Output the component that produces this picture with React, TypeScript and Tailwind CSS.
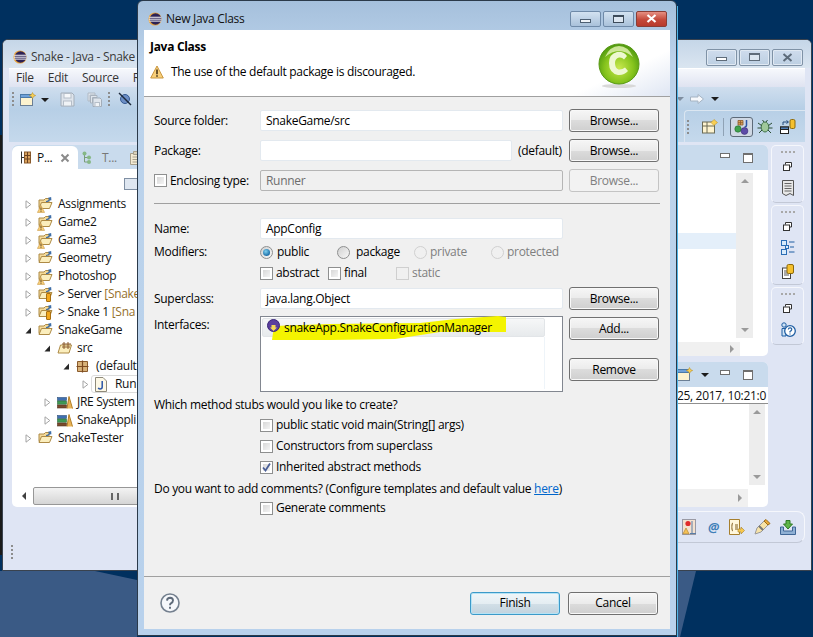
import React from "react";

const BTN_NORMAL =
  "border-[#707070] bg-[linear-gradient(#f6f6f6_0%,#ebebeb_50%,#dcdcdc_50%,#cfcfcf_100%)] shadow-[inset_0_0_0_1px_#f8f8f8] text-black";
const BTN_OFF = "border-[#c4c4c4] bg-[#f2f2f2] text-[#7f7f7f]";
const BTN_DEFAULT =
  "border-[#3c9ac9] bg-[linear-gradient(#f0f6f9_0%,#e4edf2_50%,#d2dfe7_50%,#c2d3de_100%)] shadow-[inset_0_0_0_1px_#b5e3f5] text-black";

function Btn({ label, kind = "normal", w = "w-[90px]" }: { label: string; kind?: "normal" | "off" | "default"; w?: string }) {
  const look = kind === "off" ? BTN_OFF : kind === "default" ? BTN_DEFAULT : BTN_NORMAL;
  return (
    <div className={`${w} h-[23px] shrink-0 rounded-[3px] border flex items-center justify-center ${look}`}>
      {label}
    </div>
  );
}

function Check({ on, off }: { on?: boolean; off?: boolean }) {
  return (
    <div className={`w-[13px] h-[13px] shrink-0 border ${off ? "border-[#cfcfcf] bg-[#f0f0f0]" : "border-[#8e8f8f] bg-white"} p-[2px]`}>
      <div className={`w-full h-full relative ${off ? "" : "bg-[linear-gradient(135deg,#d8d8d8,#f4f4f4)]"}`}>
        {on && (
          <svg viewBox="0 0 9 9" className="absolute left-[-1px] top-[-1px] w-[9px] h-[9px]">
            <path d="M1 4.5 L3.5 7.5 L8 0.5" fill="none" stroke="#4a5f97" strokeWidth="1.8" />
          </svg>
        )}
      </div>
    </div>
  );
}

function Radio({ on, off }: { on?: boolean; off?: boolean }) {
  return (
    <div className={`w-[13px] h-[13px] shrink-0 rounded-full border flex items-center justify-center ${off ? "border-[#d0d0d0] bg-[#f0f0f0]" : "border-[#8e8f8f] bg-[linear-gradient(135deg,#d0d0d0,#f8f8f8)]"}`}>
      {on && <div className="w-[7px] h-[7px] rounded-full bg-[radial-gradient(circle_at_40%_35%,#7fd0ef,#1a6ea8_70%,#0c4f86)]" />}
    </div>
  );
}

function FormRow({ className = "", label, children }: { className?: string; label?: string; children: React.ReactNode }) {
  return (
    <div className={`flex items-center ${className}`}>
      <div className="w-[106px] shrink-0">{label}</div>
      {children}
    </div>
  );
}

function Field({ value, w = "w-[303px]", off }: { value?: string; w?: string; off?: boolean }) {
  return (
    <div className={`${w} h-[21px] shrink-0 rounded-[2px] border px-[5px] leading-[19px] ${off ? "border-[#b5b5b5] bg-[#f0f0f0] text-[#6d6d6d]" : "border-[#e3e9ef] bg-white"}`}>
      {value}
    </div>
  );
}

function EclipseLogo({ className = "" }: { className?: string }) {
  return (
    <svg viewBox="0 0 16 16" className={className}>
      <circle cx="8" cy="8" r="7.5" fill="#e8a33d" />
      <circle cx="8.6" cy="8" r="6.6" fill="#2c2255" />
      <path d="M1.5 6 H15 M1 8.2 H15.5 M1.5 10.4 H15" stroke="#fff" strokeWidth="1.1" />
    </svg>
  );
}

function WarnBadge({ className = "" }: { className?: string }) {
  return (
    <svg viewBox="0 0 14 14" className={className}>
      <path d="M7 1 L13.3 13 H0.7 Z" fill="#f8cf7a" stroke="#c9963f" strokeLinejoin="round" />
      <path d="M7 4.5 V9.3 M7 10.3 V11.8" stroke="#3a2a10" strokeWidth="1.5" />
    </svg>
  );
}

function FolderIcon({ badge }: { badge?: "warn" | "lock" }) {
  return (
    <div className="relative w-[15px] h-[14px] shrink-0">
      <svg viewBox="0 0 15 14" className="w-[15px] h-[14px]">
        <path d="M1 3 H6 L7.5 1.5 H11 V10.5 H1 Z" fill="#f3d998" stroke="#ad8a45" />
        <path d="M1 11.5 L3.5 5.5 H14 L11.5 11.5 Z" fill="#fbeebd" stroke="#ad8a45" />
        <path d="M8 4.5 C10 4.5 11.5 3.5 12.5 1 M12.8 3.4 L12.6 0.8 L10.3 1.4" fill="none" stroke="#3f6fa8" strokeWidth="1.2" />
      </svg>
      {badge === "warn" && <WarnBadge className="absolute left-[-1px] top-[8px] w-[8px] h-[8px]" />}
      {badge === "lock" && <div className="absolute left-[8px] top-[6px] w-[5px] h-[9px] rounded-[1px] bg-[#f2a71d] border border-[#a96f10]" />}
    </div>
  );
}

function PackageIcon({ className = "" }: { className?: string }) {
  return (
    <svg viewBox="0 0 13 13" className={className}>
      <path d="M1.5 1.5 H11.5 V11.5 H1.5 Z" fill="#d8b27a" stroke="#8a5b2c" />
      <path d="M6.5 0.5 V12.5 M0.5 6.5 H12.5" stroke="#7d4a20" strokeWidth="1.2" />
    </svg>
  );
}

function SrcIcon() {
  return (
    <svg viewBox="0 0 16 14" className="w-[16px] h-[14px] shrink-0">
      <path d="M1 12 L3.5 4 H14.5 L12 12 Z" fill="#fbeebd" stroke="#ad8a45" />
      <path d="M7 1 V8 M11 1 V8 M5 3 H14 M5 6 H13" stroke="#8a5b2c" />
    </svg>
  );
}

function JavaFileIcon() {
  return (
    <svg viewBox="0 0 12 15" className="w-[12px] h-[15px] shrink-0">
      <path d="M0.5 0.5 H8 L11.5 4 V14.5 H0.5 Z" fill="#fdf8e6" stroke="#8f8a7a" />
      <path d="M7.2 4 V10 Q7.2 12 5 12 Q3.6 12 3.3 10.8" fill="none" stroke="#2b55a6" strokeWidth="1.5" />
    </svg>
  );
}

function LibIcon() {
  return (
    <svg viewBox="0 0 16 13" className="w-[16px] h-[13px] shrink-0">
      <rect x="0.5" y="1.5" width="9" height="3" fill="#3f6fb0" stroke="#30507c" strokeWidth="0.6" />
      <rect x="0.5" y="5" width="9" height="3.2" fill="#3f9a55" stroke="#2f6e3f" strokeWidth="0.6" />
      <rect x="0.5" y="9" width="9" height="3" fill="#7a4a2c" stroke="#553320" strokeWidth="0.6" />
      <path d="M10 12.5 L12 0.5 L15.5 12.5" fill="#e9b356" stroke="#b37f26" />
    </svg>
  );
}

function Twisty({ open }: { open?: boolean }) {
  return (
    <svg viewBox="0 0 7 9" className="w-[7px] h-[9px] shrink-0">
      {open ? <path d="M6 1.5 V7.5 H0.5 Z" fill="#262626" /> : <path d="M1 0.8 L5.8 4.5 L1 8.2 Z" fill="#fff" stroke="#a3a3a3" />}
    </svg>
  );
}

function TreeRow({ level = 0, open, icon, selected, children }: { level?: number; open?: boolean; icon: React.ReactNode; selected?: boolean; children: React.ReactNode }) {
  const indent = ["pl-[13px]", "pl-[32px]", "pl-[51px]", "pl-[70px]"][level];
  return (
    <div className={`h-[18px] flex items-center whitespace-nowrap ${indent}`}>
      <div className="w-[13px] flex items-center"><Twisty open={open} /></div>
      <div className={`flex items-center h-[18px] ${selected ? "border border-[#dcdcdc] rounded-[3px] -ml-[4px] pl-[3px] pr-[6px]" : ""}`}>
        <div className="w-[20px] flex items-center">{icon}</div>
        <span>{children}</span>
      </div>
    </div>
  );
}

function GripV({ className = "" }: { className?: string }) {
  return (
    <div className={`w-[2px] flex flex-col gap-[2px] ${className}`}>
      {[0, 1, 2, 3].map((i) => <div key={i} className="w-[2px] h-[2px] bg-[#8d8d8d]" />)}
    </div>
  );
}

function NewWinIcon() {
  return (
    <svg viewBox="0 0 16 15" className="w-[16px] h-[15px] shrink-0">
      <rect x="0.5" y="2.5" width="12" height="11" fill="#fdf3cf" stroke="#6b7f95" />
      <rect x="0.5" y="2.5" width="12" height="3" fill="#6fa1d8" stroke="#4b7aa8" />
      <path d="M12.5 0.5 L13.6 2.6 L15.7 3.5 L13.6 4.5 L12.5 6.6 L11.4 4.5 L9.3 3.5 L11.4 2.6 Z" fill="#f7cf55" stroke="#b58b20" strokeWidth="0.5" />
    </svg>
  );
}

function SaveOffIcon() {
  return (
    <svg viewBox="0 0 15 15" className="w-[15px] h-[15px] shrink-0">
      <path d="M1 1 H12 L14 3 V14 H1 Z" fill="#dfe5ec" stroke="#a2adb9" />
      <rect x="4" y="1.5" width="7" height="4.5" fill="#f6f8fa" stroke="#b5bec8" />
      <rect x="3.5" y="9" width="8" height="5" fill="#f0f3f6" stroke="#b5bec8" />
    </svg>
  );
}

function SaveAllOffIcon() {
  return (
    <svg viewBox="0 0 15 15" className="w-[15px] h-[15px] shrink-0">
      <path d="M1 1 H8 V3 H3 V9 H1 Z" fill="#dfe5ec" stroke="#b0bac5" />
      <path d="M3.5 3.5 H10 V5.5 H5.5 V11 H3.5 Z" fill="#dfe5ec" stroke="#a9b3be" />
      <path d="M6 6 H13 L14.5 7.5 V14.5 H6 Z" fill="#dfe5ec" stroke="#a2adb9" />
      <rect x="8" y="10.5" width="4.5" height="4" fill="#f0f3f6" stroke="#b5bec8" />
    </svg>
  );
}

function Caret({ grey }: { grey?: boolean }) {
  return <div className={`w-0 h-0 shrink-0 border-x-[4px] border-x-transparent border-t-[4px] ${grey ? "border-t-[#7f8ea0]" : "border-t-[#1c1c1c]"}`} />;
}

function TitleBtn({ children }: { children: React.ReactNode }) {
  return (
    <div className="w-[31px] h-[17px] rounded-[2px] border border-[#7f92a6] bg-[linear-gradient(#cfdced,#bccfe2)] flex items-center justify-center shadow-[inset_0_0_0_1px_#e0e9f3]">
      {children}
    </div>
  );
}

function ViewMinMax() {
  return (
    <div className="flex items-center gap-[13px]">
      <div className="w-[10px] h-[5px] border border-[#6f6f6f] bg-white -mt-[4px]" />
      <div className="w-[10px] h-[10px] border border-[#6f6f6f] border-t-[2px] bg-white" />
    </div>
  );
}

function Restore() {
  return (
    <svg viewBox="0 0 9 9" className="w-[9px] h-[9px]">
      <path d="M2.5 2.5 V0.5 H8.5 V5 H6.5" fill="#fff" stroke="#333" />
      <rect x="0.5" y="3" width="6" height="5.5" fill="#fff" stroke="#333" />
    </svg>
  );
}

function TrimDots() {
  return (
    <div className="flex gap-[2px]">
      {[0, 1, 2, 3].map((i) => <div key={i} className="w-[2px] h-[2px] bg-[#a8a8a8]" />)}
    </div>
  );
}

function TrimBox({ h, children }: { h: string; children: React.ReactNode }) {
  return (
    <div className={`${h} w-[33px] rounded-[5px] border border-[#f5f7fc] border-b-[#c2c8d6] flex flex-col items-center pt-[5px] gap-[9px]`}>
      <TrimDots />
      <Restore />
      {children}
    </div>
  );
}

function ArrowScroll({ dir }: { dir: "up" | "down" | "left" | "right" }) {
  const cls = {
    up: "border-x-[4px] border-x-transparent border-b-[4px] border-b-[#9a9a9a]",
    down: "border-x-[4px] border-x-transparent border-t-[4px] border-t-[#9a9a9a]",
    left: "border-y-[4px] border-y-transparent border-r-[4px] border-r-[#404040]",
    right: "border-y-[4px] border-y-transparent border-l-[4px] border-l-[#9a9a9a]",
  }[dir];
  return <div className={`w-0 h-0 ${cls}`} />;
}

function EclipseWindow() {
  return (
    <div className="absolute left-[2px] top-[39px] w-[810px] h-[532px] rounded-t-[6px] border border-[#39424e] bg-[#dfe5f4] flex flex-col overflow-hidden text-[#111]">
      <div className="h-[28px] shrink-0 flex items-center bg-[linear-gradient(#c5d6e8,#dae5f0)] pl-[10px] pr-[8px] pt-[6px]">
        <EclipseLogo className="w-[14px] h-[14px]" />
        <span className="ml-[4px] text-[#3a3a3a]">Snake - Java - Snake</span>
        <div className="ml-auto flex gap-[2px]">
          <TitleBtn><div className="w-[11px] h-[4px] border border-[#5f6c7a] bg-white mt-[4px]" /></TitleBtn>
          <TitleBtn><div className="w-[11px] h-[8px] border border-[#5f6c7a] border-t-[2px] bg-[#dce6f1]" /></TitleBtn>
          <TitleBtn>
            <svg viewBox="0 0 11 9" className="w-[11px] h-[9px]"><path d="M1.5 1 L9.5 8 M9.5 1 L1.5 8" stroke="#5d6b7a" strokeWidth="2" /></svg>
          </TitleBtn>
        </div>
      </div>
      <div className="h-[19px] shrink-0 mx-[6px] bg-[linear-gradient(#f6f8fc,#dfe3f1)] border-t border-white flex items-center pl-[7px] gap-[14px] text-[#333]">
        <span>File</span><span>Edit</span><span>Source</span><span>Refactor</span>
      </div>
      <div className="h-[55px] shrink-0 mx-[6px] bg-[linear-gradient(#cfdeee,#b7cfe6_40%,#c5d9ec)] flex">
        <div className="flex items-start pt-[5px] pl-[3px] w-[200px] gap-[6px]">
          <GripV />
          <NewWinIcon />
          <div className="mt-[6px] -ml-[1px] mr-[5px]"><Caret /></div>
          <SaveOffIcon />
          <div className="ml-[6px]"><SaveAllOffIcon /></div>
          <GripV />
          <svg viewBox="0 0 14 14" className="w-[14px] h-[14px] ml-[2px]">
            <circle cx="7" cy="7" r="4.5" fill="#6d8fc6" stroke="#365a92" />
            <path d="M1 1 L13 13" stroke="#1d2a3c" strokeWidth="1.4" />
          </svg>
          <GripV className="ml-[2px]" />
        </div>
        <div className="flex-1" />
        <div className="w-[129px] relative flex flex-col">
          <div className="h-[23px] flex items-center">
            <Caret grey />
            <svg viewBox="0 0 14 10" className="w-[14px] h-[10px] ml-[6px] mr-[7px]"><path d="M0.5 3 H8 V0.5 L13.5 5 L8 9.5 V7 H0.5 Z" fill="#f7f9fc" stroke="#a5b3c2" /></svg>
            <Caret />
          </div>
          <div className="flex-1 ml-[8px] flex items-center pl-[2px] rounded-tl-[4px] border-l border-t border-[#dbe6f1]">
            <GripV />
            <svg viewBox="0 0 16 15" className="w-[16px] h-[15px] ml-[13px]">
              <rect x="0.5" y="3" width="12" height="11" fill="#fdf3cf" stroke="#6b6b55" />
              <path d="M0.5 7 H12.5 M5 3 V14" stroke="#6b6b55" />
              <path d="M12 0.5 L15.5 3.5 L12 6.5 L9 3.5 Z" fill="#f7cf55" stroke="#b58b20" strokeWidth="0.5" />
            </svg>
            <div className="w-[1px] h-[18px] bg-[#8fa2b5] ml-[5px]" />
            <div className="w-[23px] h-[20px] ml-[6px] rounded-[3px] border border-[#5d6a78] bg-[#cfd8e4] flex items-center justify-center">
              <svg viewBox="0 0 16 16" className="w-[16px] h-[16px]">
                <path d="M4 1.5 H9 V6 H4 Z M6.5 1.5 V6 M4 3.7 H9" fill="#d9a25f" stroke="#8a5b2c" strokeWidth="0.8" />
                <path d="M12.5 1 V6 Q12.5 8 10.5 8" fill="none" stroke="#2b55a6" strokeWidth="1.5" />
                <circle cx="4" cy="10" r="3.2" fill="#3fa34d" stroke="#24682f" strokeWidth="0.6" />
                <circle cx="10.5" cy="12" r="3.4" fill="#5d4ba8" stroke="#3a2c78" strokeWidth="0.6" />
              </svg>
            </div>
            <svg viewBox="0 0 16 15" className="w-[16px] h-[15px] ml-[4px]">
              <ellipse cx="8" cy="8" rx="3.8" ry="5" fill="#9fc89a" stroke="#3f7048" />
              <path d="M1 4 L4.5 6.5 M15 4 L11.5 6.5 M0.5 9 H4 M15.5 9 H12 M2 14 L5 11 M14 14 L11 11 M5.5 1 L7 3 M10.5 1 L9 3" stroke="#2b4d33" />
            </svg>
            <svg viewBox="0 0 16 15" className="w-[16px] h-[15px] ml-[7px]">
              <rect x="0.5" y="8" width="8" height="6.5" fill="#fff" stroke="#222" />
              <rect x="0.5" y="8" width="8" height="2.5" fill="#4f7fb8" stroke="#222" />
              <rect x="10" y="0.5" width="5" height="9" rx="1.5" fill="#f5c02e" stroke="#8d6a0c" />
              <path d="M3 6 V3 H8 M6.5 1.5 L8.5 3 L6.5 4.5" fill="none" stroke="#234a7d" />
            </svg>
          </div>
        </div>
      </div>
      <div className="flex-1 flex min-h-0 pt-[3px] pb-[29px] pl-[9px] pr-[6px] relative">
        <div className="w-[300px] h-[362px] rounded-[5px] bg-white flex flex-col overflow-hidden shrink-0">
          <div className="h-[24px] shrink-0 bg-[#c9dbed] flex items-end">
            <div className="w-[66px] h-[23px] bg-white rounded-t-[6px] flex items-center pl-[9px] gap-[6px]">
              <svg viewBox="0 0 10 13" className="w-[10px] h-[13px]">
                <path d="M0.5 0.5 V12.5 M0.5 6.5 H3" stroke="#333" />
                <rect x="3.5" y="1" width="6" height="11" fill="#d9a25f" stroke="#8a5b2c" />
                <path d="M3.5 4.5 H9.5 M3.5 8 H9.5 M6.5 1 V12" stroke="#6d4320" />
              </svg>
              <span>P...</span>
              <svg viewBox="0 0 10 10" className="w-[10px] h-[10px] ml-[2px]">
                <path d="M1.5 1.5 L8.5 8.5 M8.5 1.5 L1.5 8.5" stroke="#8a8a8a" strokeWidth="2" />
              </svg>
            </div>
            <div className="h-[23px] flex items-center pl-[4px] gap-[7px] text-[#777]">
              <svg viewBox="0 0 10 14" className="w-[10px] h-[14px]">
                <path d="M2.5 3 V11 H6 M2.5 6.5 H6" fill="none" stroke="#7a9c7a" />
                <circle cx="2.5" cy="2.5" r="2" fill="#86b886" />
                <circle cx="7" cy="6.5" r="2" fill="#86b886" />
                <circle cx="7" cy="11" r="2" fill="#86b886" />
              </svg>
              <span className="ml-[3px]">T...</span>
              <svg viewBox="0 0 11 14" className="w-[11px] h-[14px] ml-[6px]">
                <path d="M0.5 2.5 H10.5 V13.5 H0.5 Z" fill="#f3ead3" stroke="#a8a08c" />
                <path d="M2.5 6 H8.5 M2.5 8.5 H8.5 M2.5 11 H8.5" stroke="#a8a08c" />
                <path d="M3.5 0.5 H7.5 V3.5 H3.5 Z" fill="#d8d0bb" stroke="#a8a08c" />
              </svg>
            </div>
          </div>
          <div className="h-[16px] shrink-0 relative">
            <div className="absolute left-[112px] top-[9px] w-[14px] h-[12px] border border-[#7f8fa3] bg-[#dfe7f1]" />
          </div>
          <div className="flex-1 pt-[10px]">
            <TreeRow icon={<FolderIcon badge="warn" />}>Assignments</TreeRow>
            <TreeRow icon={<FolderIcon badge="warn" />}>Game2</TreeRow>
            <TreeRow icon={<FolderIcon badge="warn" />}>Game3</TreeRow>
            <TreeRow icon={<FolderIcon />}>Geometry</TreeRow>
            <TreeRow icon={<FolderIcon badge="warn" />}>Photoshop</TreeRow>
            <TreeRow icon={<FolderIcon badge="lock" />}>&gt; Server <span className="text-[#95702c]">[Snake</span></TreeRow>
            <TreeRow icon={<FolderIcon badge="lock" />}>&gt; Snake 1 <span className="text-[#95702c]">[Sna</span></TreeRow>
            <TreeRow open icon={<FolderIcon />}>SnakeGame</TreeRow>
            <TreeRow level={1} open icon={<SrcIcon />}>src</TreeRow>
            <TreeRow level={2} open icon={<PackageIcon className="w-[13px] h-[13px] shrink-0" />}>(default</TreeRow>
            <TreeRow level={3} selected icon={<JavaFileIcon />}>Run</TreeRow>
            <TreeRow level={1} icon={<LibIcon />}>JRE System</TreeRow>
            <TreeRow level={1} icon={<LibIcon />}>SnakeAppli</TreeRow>
            <TreeRow icon={<FolderIcon />}>SnakeTester</TreeRow>
          </div>
          <div className="h-[18px] shrink-0 ml-[3px] mb-[2px] flex">
            <div className="w-[18px] flex items-center justify-center"><ArrowScroll dir="left" /></div>
            <div className="flex-1 border border-[#979797] rounded-[2px] bg-[linear-gradient(#f3f3f3,#d5d5d5)] flex items-center pl-[77px]">
              <div className="w-[8px] h-[7px] border-x-2 border-[#666]" />
            </div>
          </div>
        </div>
        <div className="flex-1" />
        <div className="w-[370px] shrink-0 flex flex-col gap-[6px]">
          <div className="h-[211px] rounded-[5px] bg-white flex flex-col overflow-hidden">
            <div className="h-[25px] shrink-0 bg-[#c9dbed] flex items-center justify-end pr-[15px]"><ViewMinMax /></div>
            <div className="flex-1 flex pt-[3px]">
              <div className="flex-1 pt-[60px]"><div className="h-[16px] bg-[#e4effa]" /></div>
              <div className="w-[17px] h-[165px] bg-[#ededed] flex flex-col items-center justify-between py-[6px]">
                <ArrowScroll dir="up" />
                <ArrowScroll dir="down" />
              </div>
              <div className="w-[15px]" />
            </div>
            <div className="h-[14px] shrink-0 bg-[#f0f0f0] mr-[28px] flex items-center justify-end pr-[6px]"><ArrowScroll dir="right" /></div>
          </div>
          <div className="h-[145px] rounded-[5px] bg-white flex flex-col overflow-hidden">
            <div className="h-[25px] shrink-0 bg-[#c9dbed] flex items-center justify-end pr-[15px] gap-[8px]">
              <NewWinIcon />
              <Caret />
              <div className="ml-[3px]"><ViewMinMax /></div>
            </div>
            <div className="h-[17px] shrink-0 border-b border-[#8f8f8f] flex items-center justify-end pr-[2px] pt-[2px] whitespace-nowrap">25, 2017, 10:21:0</div>
            <div className="flex-1 flex justify-end pr-[3px]">
              <div className="w-[16px] h-[81px] bg-[#ededed] flex flex-col items-center justify-between py-[6px]">
                <ArrowScroll dir="up" />
                <ArrowScroll dir="down" />
              </div>
            </div>
            <div className="h-[18px] shrink-0 bg-[#f0f0f0] mr-[20px] flex items-center justify-end pr-[6px]"><ArrowScroll dir="right" /></div>
          </div>
        </div>
        <div className="w-[37px] shrink-0 pl-[3px] flex flex-col gap-[2px] items-start">
          <TrimBox h="h-[58px]">
            <svg viewBox="0 0 12 16" className="w-[12px] h-[16px]">
              <path d="M0.5 0.5 H11.5 V15.5 L8 13.5 L4 15.5 L0.5 13.5 Z" fill="#e8e8e8" stroke="#555" />
              <path d="M2.5 3.5 H9.5 M2.5 6 H9.5 M2.5 8.5 H9.5 M2.5 11 H9.5" stroke="#666" />
            </svg>
          </TrimBox>
          <TrimBox h="h-[80px]">
            <svg viewBox="0 0 14 15" className="w-[14px] h-[15px]">
              <rect x="0.5" y="0.5" width="5" height="5" fill="#d8ebfb" stroke="#2a6db5" />
              <rect x="4.5" y="5.5" width="3" height="3" fill="#d8ebfb" stroke="#2a6db5" />
              <rect x="0.5" y="9.5" width="5" height="5" fill="#d8ebfb" stroke="#2a6db5" />
              <path d="M8 2 H13.5 M9 7 H13 M8 12 H13.5" stroke="#1f5ea3" />
            </svg>
            <svg viewBox="0 0 12 15" className="w-[12px] h-[15px]">
              <rect x="0.5" y="4" width="8" height="10.5" fill="#fff" stroke="#444" />
              <path d="M2 7 H7 M2 9 H7 M2 11 H7" stroke="#555" />
              <rect x="5" y="0.5" width="6.5" height="9" rx="1.5" fill="#f5c02e" stroke="#8d6a0c" />
            </svg>
          </TrimBox>
          <TrimBox h="h-[58px]">
            <svg viewBox="0 0 16 16" className="w-[16px] h-[16px]">
              <circle cx="4" cy="3" r="2.2" fill="#cfe3f5" stroke="#1f5ea3" />
              <path d="M2 14 V6.5 H6 V14 Z" fill="#cfe3f5" stroke="#1f5ea3" />
              <circle cx="10" cy="9" r="5.3" fill="#fff" stroke="#1f5ea3" strokeWidth="1.3" />
              <path d="M8.3 7.5 Q8.5 5.8 10.2 5.9 Q12 6.1 11.7 7.8 Q11.3 9 10 9.5 V10.6 M10 11.4 V12.6" fill="none" stroke="#1f5ea3" strokeWidth="1.2" />
            </svg>
          </TrimBox>
        </div>
        <div className="absolute left-[500px] right-[6px] top-[369px] h-[32px] rounded-r-[8px] border border-l-0 border-[#f5f7fc] border-b-[#c2c8d6] flex items-center justify-end pr-[8px] gap-[9px]">
          <svg viewBox="0 0 16 16" className="w-[16px] h-[16px]">
            <rect x="0.5" y="0.5" width="13" height="15" fill="#f3e1cf" stroke="#9a9aa5" />
            <circle cx="6" cy="4.5" r="2.6" fill="#e02a2a" />
            <path d="M1 14.8 L4 9 L7 14.8 Z" fill="#f6c257" stroke="#a87a1f" strokeWidth="0.6" />
            <path d="M10 2 V14 M8 14.5 H14" stroke="#5a7da6" />
          </svg>
          <span className="w-[12px] ml-[1px] text-[#3f7fb8] text-[13px] font-bold italic leading-none">@</span>
          <svg viewBox="0 0 16 16" className="w-[16px] h-[16px]">
            <path d="M0.5 0.5 H10.5 V15.5 H0.5 Z" fill="#fff7dd" stroke="#a67f2e" />
            <path d="M4 4 Q3 4 3 6 Q3 8 2.5 8 Q3 8 3 10 Q3 12 4 12 M6 6 H9 M6 8 H9 M6 10 H9" fill="none" stroke="#7d5a1a" />
            <path d="M9 10 H12 V8 L15.5 11.5 L12 15 V13 H9 Z" fill="#f7c84f" stroke="#a67f2e" strokeWidth="0.6" />
          </svg>
          <svg viewBox="0 0 17 16" className="w-[17px] h-[16px]">
            <path d="M1 15 L3 9 L10 2 L14 6 L7 13 Z" fill="#f7e3a8" stroke="#9a9a9a" />
            <path d="M10 2 L12 0.5 L16 4.5 L14 6 Z" fill="#e9a93a" stroke="#9c6d18" />
            <path d="M5 7 L9 11" stroke="#777" strokeWidth="2" />
          </svg>
          <svg viewBox="0 0 16 15" className="w-[16px] h-[15px]">
            <path d="M0.5 7 V14.5 H15.5 V7 H12.5 V11 H3.5 V7 Z" fill="#8fb0d4" stroke="#3f6696" />
            <path d="M6 0.5 H10 V4 H12.5 L8 9 L3.5 4 H6 Z" fill="#5fb548" stroke="#2f7a25" />
          </svg>
        </div>
        <GripV className="absolute left-[8px] top-[403px]" />
      </div>
    </div>
  );
}

function NewClassDialog() {
  return (
    <div className="absolute left-[137px] top-0 w-[540px] h-[636px] rounded-t-[6px] border border-[#2b3a4a] bg-[linear-gradient(#a5c0dc,#bcd3eb_60px,#b8d1ec)] px-[6px] pb-[6px] flex flex-col text-black">
      <div className="h-[29px] shrink-0 flex items-center pl-[4px] pr-[3px] pt-[6px]">
        <EclipseLogo className="w-[14px] h-[14px]" />
        <span className="ml-[4px] text-[#111]">New Java Class</span>
        <div className="ml-auto flex gap-[2px]">
          <div className="w-[31px] h-[16px] rounded-[2px] border border-[#6f8aa8] bg-[linear-gradient(#d3e2f1,#a9c1da)] flex items-center justify-center">
            <div className="w-[11px] h-[4px] mt-[4px] border border-[#4d5f72] bg-[#eef3f8]" />
          </div>
          <div className="w-[31px] h-[16px] rounded-[2px] border border-[#6f8aa8] bg-[linear-gradient(#d3e2f1,#a9c1da)] flex items-center justify-center">
            <div className="w-[11px] h-[8px] border border-[#3d4b5a] border-t-[2px] bg-[#dce6f1]" />
          </div>
          <div className="w-[31px] h-[16px] rounded-[2px] border border-[#8a3d35] bg-[linear-gradient(#e58f82,#c4493a_55%,#b83a2c)] flex items-center justify-center">
            <svg viewBox="0 0 11 9" className="w-[11px] h-[9px]"><path d="M1.5 1 L9.5 8 M9.5 1 L1.5 8" stroke="#fff" strokeWidth="2.2" /></svg>
          </div>
        </div>
      </div>
      <div className="flex-1 flex flex-col bg-[#f0f0f0] min-h-0">
        <div className="h-[67px] shrink-0 border-b border-[#a0a0a0] bg-[linear-gradient(155deg,#ffffff_85%,#dfe6f3_100%)] flex justify-between pl-[6px] pr-[30px] pt-[9px]">
          <div>
            <div className="font-bold leading-[16px]">Java Class</div>
            <div className="flex items-center gap-[7px] mt-[8px]">
              <WarnBadge className="w-[14px] h-[14px]" />
              <span>The use of the default package is discouraged.</span>
            </div>
          </div>
          <svg viewBox="0 0 42 46" className="w-[42px] h-[46px] mt-[4px] shrink-0">
            <defs>
              <radialGradient id="cball" cx="50%" cy="60%" r="60%">
                <stop offset="0%" stopColor="#c8e84e" />
                <stop offset="60%" stopColor="#86c41d" />
                <stop offset="100%" stopColor="#4b960f" />
              </radialGradient>
            </defs>
            <ellipse cx="21" cy="43" rx="17" ry="2" fill="#d8d8d8" />
            <circle cx="21" cy="21" r="20" fill="url(#cball)" stroke="#5a9a15" />
            <path d="M7 14 Q12 3 21 3 Q30 3 35 14 Q28 8 21 8 Q14 8 7 14 Z" fill="#e6f5b8" opacity="0.8" />
            <path d="M29 13 Q25 8 19 9 Q11 11 11 20 Q11 30 20 32 Q26 32.5 30 28 L27 24.5 Q24 27 20.5 26.5 Q17 25 17 20 Q17 15.5 21 14.5 Q24 14 26 16.5 Z" fill="#eef8d2" />
          </svg>
        </div>

        <div className="flex-1 flex flex-col pl-[10px] pr-[11px] pt-[12px] min-h-0">
          <FormRow label="Source folder:">
            <Field value="SnakeGame/src" />
            <div className="ml-[6px]"><Btn label="Browse..." /></div>
          </FormRow>
          <FormRow className="mt-[7px]" label="Package:">
            <Field w="w-[252px]" />
            <span className="w-[51px] pl-[6px] whitespace-nowrap">(default)</span>
            <div className="ml-[6px]"><Btn label="Browse..." /></div>
          </FormRow>
          <div className="flex items-center mt-[7px]">
            <div className="w-[106px] shrink-0 flex items-center gap-[3px]"><Check />Enclosing type:</div>
            <Field value="Runner" off />
            <div className="ml-[6px]"><Btn label="Browse..." kind="off" /></div>
          </div>
          <div className="h-[1px] bg-[#a0a0a0] mt-[11px] w-[506px]" />
          <FormRow className="mt-[14px]" label="Name:">
            <Field value="AppConfig" />
          </FormRow>
          <FormRow className="mt-[6px] h-[14px]" label="Modifiers:">
            <div className="flex items-center">
              <div className="w-[77px] flex items-center gap-[4px]"><Radio on />public</div>
              <div className="w-[77px] flex items-center gap-[6px]"><Radio />package</div>
              <div className="w-[77px] flex items-center gap-[3px] text-[#7f7f7f]"><Radio off />private</div>
              <div className="flex items-center gap-[3px] text-[#7f7f7f]"><Radio off />protected</div>
            </div>
          </FormRow>
          <FormRow className="mt-[6px] h-[16px]">
            <div className="flex items-center">
              <div className="w-[68px] flex items-center gap-[3px]"><Check />abstract</div>
              <div className="w-[68px] flex items-center gap-[3px]"><Check />final</div>
              <div className="flex items-center gap-[3px] text-[#7f7f7f]"><Check off />static</div>
            </div>
          </FormRow>
          <FormRow className="mt-[6px]" label="Superclass:">
            <Field value="java.lang.Object" />
            <div className="ml-[6px]"><Btn label="Browse..." /></div>
          </FormRow>
          <div className="flex items-start mt-[6px]">
            <div className="w-[106px] shrink-0">Interfaces:</div>
            <div className="w-[303px] h-[76px] shrink-0 border border-[#828790] bg-white p-[1px] relative">
              <div className="w-[283px] h-[19px] rounded-[2px] border border-[#e2e5e8] bg-[linear-gradient(#f6f7f8,#e7eaec)] relative">
                <svg viewBox="0 0 242 26" className="absolute left-[9px] top-[-3px] w-[242px] h-[26px]">
                  <path d="M2 10 L58 8 L148 7 L184 3 L226 0 L234 1 L234 16 L168 16 L123 23 L58 24 L0 24 Z" fill="#f4f400" />
                </svg>
                <svg viewBox="0 0 13 13" className="absolute left-[4px] top-[0px] w-[13px] h-[13px]">
                  <circle cx="6.5" cy="6.5" r="6" fill="#5b3f9e" stroke="#3a2678" />
                  <path d="M4.5 6 H8.5 V8.5 H10 L6.5 12 L3 8.5 H4.5 Z" fill="#f3d85a" />
                </svg>
                <span className="absolute left-[21px] top-[0px] whitespace-nowrap">snakeApp.SnakeConfigurationManager</span>
              </div>
              <div className="absolute left-[283px] top-[20px] bottom-[2px] w-[1px] bg-[#eef4f9]" />
            </div>
            <div className="ml-[6px] pt-[1px] flex flex-col gap-[18px]">
              <Btn label="Add..." />
              <Btn label="Remove" />
            </div>
          </div>
          <div className="mt-[5px] h-[16px] leading-[16px]">Which method stubs would you like to create?</div>
          <div className="mt-[4px] flex flex-col gap-[5px] pl-[106px]">
            <div className="h-[16px] flex items-center gap-[3px]"><Check />public static void main(String[] args)</div>
            <div className="h-[16px] flex items-center gap-[3px]"><Check />Constructors from superclass</div>
            <div className="h-[16px] flex items-center gap-[3px]"><Check on />Inherited abstract methods</div>
          </div>
          <div className="mt-[6px] h-[16px] leading-[16px] whitespace-nowrap">
            Do you want to add comments? (Configure templates and default value <span className="text-[#0066cc] underline">here</span>)
          </div>
          <div className="mt-[3px] pl-[106px] h-[16px] flex items-center gap-[3px]"><Check />Generate comments</div>
        </div>

        <div className="h-[53px] shrink-0 border-t border-[#a0a0a0] flex items-center pl-[16px] pr-[12px]">
          <svg viewBox="0 0 20 20" className="w-[20px] h-[20px]">
            <circle cx="10" cy="10" r="9" fill="#f6f8fb" stroke="#74808f" strokeWidth="1.6" />
            <path d="M7 7.6 Q7.2 4.8 10.1 4.8 Q13 5 13 7.6 Q13 9.3 10.9 10.3 Q10 10.8 10 12.2 M10 13.8 V15.8" fill="none" stroke="#5f6b7a" strokeWidth="1.9" />
          </svg>
          <div className="ml-auto flex gap-[8px]">
            <Btn label="Finish" kind="default" />
            <Btn label="Cancel" />
          </div>
        </div>
      </div>
    </div>
  );
}

export default function App() {
  return (
    <div className="relative w-[813px] h-[637px] overflow-hidden bg-[#00305f] text-[12px] tracking-[-0.3px] font-['Open_Sans',sans-serif]">
      <svg viewBox="0 0 813 637" className="absolute inset-0 w-[813px] h-[637px]">
        <path d="M0 571 H95 L137 580 V637 H0 Z" fill="#3a5a85" />
        <path d="M677 571 H696 L680 637 H677 Z" fill="#3a5a85" />
      </svg>
      <div className="absolute left-0 top-[135px] w-[2px] h-[420px] bg-[#1a1a1a]" />
      <EclipseWindow />
      <NewClassDialog />
      <div className="absolute left-[677px] top-[6px] bottom-0 w-[1px] bg-[#4fb5e8]" />
    </div>
  );
}
